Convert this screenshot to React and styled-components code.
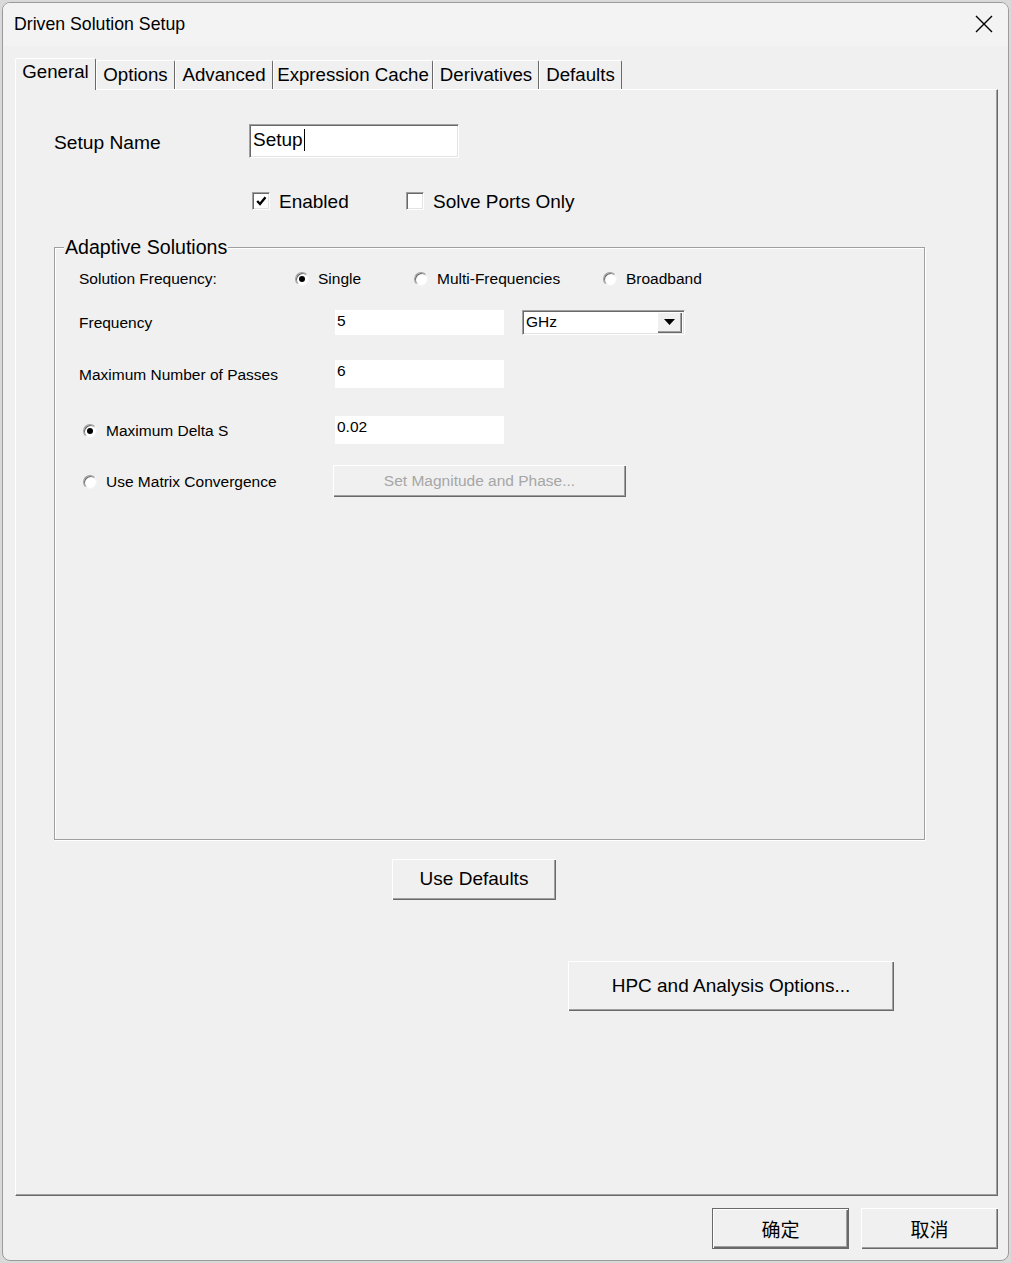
import React from 'react';
import styled, { createGlobalStyle, css } from 'styled-components';

const FONT = "'Liberation Sans', Arial, 'Noto Sans CJK SC', sans-serif";

const GlobalStyle = createGlobalStyle`
  html, body { margin: 0; padding: 0; background: #d9d9d9; }
  body { font-family: ${FONT}; color: #000; }
  #root { width: 1011px; height: 1263px; overflow: hidden; }
  * { box-sizing: border-box; }
`;

const Window = styled.div`
  margin: 2px 0 0 2px;
  width: 1007px;
  height: 1259px;
  border: 1px solid #9b9b9b;
  border-radius: 8px;
  background: #f0f0f0;
  overflow: hidden;
  display: flex;
  flex-direction: column;
`;

const TitleBar = styled.div`
  flex: none;
  height: 43px;
  background: #f3f3f3;
  display: flex;
  align-items: center;
  justify-content: space-between;
  padding: 0 14px 0 11px;
`;

const Title = styled.span`
  font-size: 17.7px;
  line-height: 22px;
  padding-bottom: 2px;
`;

const CloseButton = styled.div`
  width: 20px;
  height: 20px;
  display: flex;
  align-items: center;
  justify-content: center;
  margin-bottom: 2px;
`;

const Body = styled.div`
  flex: 1;
  display: flex;
  flex-direction: column;
  padding: 12px 0 0 12px;
`;

const TabStrip = styled.div`
  display: flex;
  align-items: flex-end;
  height: 31px;
  position: relative;
  z-index: 1;
`;

const Tab = styled.div`
  width: ${p => p.$w}px;
  height: ${p => (p.$active ? 32 : 29)}px;
  margin-bottom: ${p => (p.$active ? -1 : 0)}px;
  background: #f0f0f0;
  border-top: 1px solid #ffffff;
  border-left: 1px solid #ffffff;
  border-right: 1px solid #696969;
  border-radius: 2px 2px 0 0;
  display: flex;
  align-items: center;
  justify-content: center;
  font-size: 18.7px;
  padding-bottom: ${p => (p.$active ? 5 : 0)}px;
  white-space: nowrap;
`;

const Panel = styled.div`
  width: 983px;
  height: 1107px;
  border-top: 1px solid #ffffff;
  border-left: 1px solid #ffffff;
  border-right: 1px solid #696969;
  border-bottom: 1px solid #696969;
  box-shadow: inset -1px -1px 0 #a0a0a0;
  padding: 34px 0 0 38px;
  display: flex;
  flex-direction: column;
  align-items: flex-start;
`;

const Row = styled.div`
  display: flex;
  align-items: center;
  height: ${p => p.$h}px;
  margin-top: ${p => p.$mt || 0}px;
  padding-left: ${p => p.$pl || 0}px;
`;

const BigLabel = styled.span`
  width: ${p => p.$w}px;
  font-size: 19.2px;
  line-height: 24px;
  padding-top: 3px;
  flex: none;
`;

const sunken = css`
  border-style: solid;
  border-width: 1px;
  border-color: #a0a0a0 #ffffff #ffffff #a0a0a0;
  box-shadow: inset 1px 1px 0 #696969, inset -1px -1px 0 #e3e3e3;
`;

const NameField = styled.div`
  width: 210px;
  height: 34px;
  background: #fff;
  ${sunken};
  padding: 0 0 3px 3px;
  display: flex;
  align-items: center;
  font-size: 19px;
`;

const Caret = styled.span`
  display: inline-block;
  width: 1px;
  height: 22px;
  background: #000;
  margin-left: 1px;
`;

const CheckItem = styled.label`
  width: ${p => p.$w}px;
  display: flex;
  align-items: center;
  gap: 9px;
  font-size: 19px;
  line-height: 24px;
`;

const CheckText = styled.span`
  padding-top: 1px;
`;

const CheckBox = styled.span`
  width: 18px;
  height: 18px;
  flex: none;
  background: #fff;
  ${sunken};
  display: flex;
  align-items: center;
  justify-content: center;
`;

const Group = styled.div`
  position: relative;
  width: 871px;
  height: 593px;
  margin-top: 34px;
  border: 1px solid #a0a0a0;
  box-shadow: inset 1px 1px 0 #ffffff, 1px 1px 0 #ffffff;
  padding: 18px 0 0 24px;
  display: flex;
  flex-direction: column;
`;

const Legend = styled.span`
  position: absolute;
  top: -12px;
  left: 9px;
  padding: 0 1px;
  background: #f0f0f0;
  font-size: 19.6px;
  line-height: 22px;
`;

const SmallLabel = styled.span`
  width: ${p => p.$w}px;
  flex: none;
  font-size: 15.5px;
  line-height: 20px;
  display: flex;
  align-items: center;
  padding-top: 2px;
  padding-left: ${p => p.$pl || 0}px;
`;

const RadioItem = styled.span`
  width: ${p => p.$w || 'auto'};
  flex: none;
  display: flex;
  align-items: center;
  gap: 9px;
  font-size: 15.5px;
  line-height: 20px;
  padding-top: ${p => p.$pt || 0}px;
`;

const RadioCircle = styled.span`
  position: relative;
  width: 14px;
  height: 14px;
  flex: none;
  border-radius: 50%;
  background: #fff;
  border: 1px solid;
  border-color: #a0a0a0 #f4f4f4 #f4f4f4 #a0a0a0;
  box-shadow: inset 1px 1px 0 #696969;
  ${p =>
    p.$on &&
    css`
      &::after {
        content: '';
        position: absolute;
        left: 3px;
        top: 3px;
        width: 6px;
        height: 6px;
        border-radius: 50%;
        background: #000;
      }
    `}
`;

const FlatField = styled.div`
  width: 169px;
  height: ${p => p.$h}px;
  background: #fff;
  font-size: 15.5px;
  line-height: 20px;
  padding: 1px 0 0 2px;
  flex: none;
`;

const Select = styled.div`
  width: 163px;
  height: 25px;
  margin-left: 18px;
  background: #fff;
  ${sunken};
  display: flex;
  align-items: center;
  justify-content: space-between;
  padding: 0 2px 0 3px;
  font-size: 15.5px;
`;

const raised = css`
  border: none;
  background: #f0f0f0;
  box-shadow: inset 1px 1px 0 #ffffff, inset -1px -1px 0 #696969, inset -2px -2px 0 #a0a0a0;
`;

const ArrowBox = styled.span`
  width: 25px;
  height: 21px;
  ${raised};
  display: flex;
  align-items: center;
  justify-content: center;
`;

const Button = styled.button`
  font-family: ${FONT};
  color: ${p => (p.disabled ? '#a6a6a6' : '#000')};
  font-size: ${p => p.$fs || 19}px;
  width: ${p => p.$w}px;
  height: ${p => p.$h}px;
  margin-top: ${p => p.$mt || 0}px;
  margin-left: ${p => p.$ml || 0}px;
  padding: 0 0 1px 0;
  flex: none;
  ${raised};
  ${p =>
    p.$default &&
    css`
      border: 1px solid #696969;
      box-shadow: inset 1px 1px 0 #ffffff, inset -1px -1px 0 #696969, inset -2px -2px 0 #a0a0a0;
    `}
`;

const Footer = styled.div`
  display: flex;
  justify-content: flex-end;
  gap: 12px;
  padding-right: 10px;
  margin-top: 12px;
`;

const tabs = [
  { label: 'General', w: 81 },
  { label: 'Options', w: 79 },
  { label: 'Advanced', w: 98 },
  { label: 'Expression Cache', w: 160 },
  { label: 'Derivatives', w: 106 },
  { label: 'Defaults', w: 83 },
];

const CloseIcon = () => (
  <svg width="18" height="18" viewBox="0 0 18 18">
    <path d="M1 1 L17 17 M17 1 L1 17" stroke="#000" strokeWidth="1.4" fill="none" />
  </svg>
);

const CheckMark = () => (
  <svg width="11" height="10" viewBox="0 0 11 10">
    <path d="M1.2 5 L4 8 L9.5 1.2" stroke="#000" strokeWidth="2.4" fill="none" />
  </svg>
);

const DownArrow = () => (
  <svg width="11" height="6" viewBox="0 0 11 6">
    <path d="M0 0 L11 0 L5.5 6 Z" fill="#000" />
  </svg>
);

export default function App() {
  return (
    <>
      <GlobalStyle />
      <Window>
        <TitleBar>
          <Title>Driven Solution Setup</Title>
          <CloseButton>
            <CloseIcon />
          </CloseButton>
        </TitleBar>
        <Body>
          <TabStrip>
            {tabs.map((t, i) => (
              <Tab key={t.label} $w={t.w} $active={i === 0}>
                {t.label}
              </Tab>
            ))}
          </TabStrip>
          <Panel>
            <Row $h={34}>
              <BigLabel $w={195}>Setup Name</BigLabel>
              <NameField>
                Setup
                <Caret />
              </NameField>
            </Row>
            <Row $h={24} $mt={31} $pl={198}>
              <CheckItem $w={154}>
                <CheckBox>
                  <CheckMark />
                </CheckBox>
                <CheckText>Enabled</CheckText>
              </CheckItem>
              <CheckItem $w={200}>
                <CheckBox />
                <CheckText>Solve Ports Only</CheckText>
              </CheckItem>
            </Row>
            <Group>
              <Legend>Adaptive Solutions</Legend>
              <Row $h={24}>
                <SmallLabel $w={216}>Solution Frequency:</SmallLabel>
                <RadioItem $w="119px" $pt={2}>
                  <RadioCircle $on />
                  Single
                </RadioItem>
                <RadioItem $w="189px" $pt={2}>
                  <RadioCircle />
                  Multi-Frequencies
                </RadioItem>
                <RadioItem $pt={2}>
                  <RadioCircle />
                  Broadband
                </RadioItem>
              </Row>
              <Row $h={26} $mt={19}>
                <SmallLabel $w={256}>Frequency</SmallLabel>
                <FlatField $h={25}>5</FlatField>
                <Select>
                  GHz
                  <ArrowBox>
                    <DownArrow />
                  </ArrowBox>
                </Select>
              </Row>
              <Row $h={28} $mt={25}>
                <SmallLabel $w={256}>Maximum Number of Passes</SmallLabel>
                <FlatField $h={28}>6</FlatField>
              </Row>
              <Row $h={28} $mt={28}>
                <SmallLabel $w={256} $pl={4}>
                  <RadioItem>
                    <RadioCircle $on />
                    Maximum Delta S
                  </RadioItem>
                </SmallLabel>
                <FlatField $h={28}>0.02</FlatField>
              </Row>
              <Row $h={32} $mt={21}>
                <SmallLabel $w={254} $pl={4}>
                  <RadioItem>
                    <RadioCircle />
                    Use Matrix Convergence
                  </RadioItem>
                </SmallLabel>
                <Button disabled $w={293} $h={32} $fs={15.5}>
                  Set Magnitude and Phase...
                </Button>
              </Row>
            </Group>
            <Button $w={164} $h={41} $mt={19} $ml={338}>
              Use Defaults
            </Button>
            <Button $w={326} $h={50} $mt={61} $ml={514}>
              HPC and Analysis Options...
            </Button>
          </Panel>
          <Footer>
            <Button $default $w={137} $h={41}>
              确定
            </Button>
            <Button $w={137} $h={41}>
              取消
            </Button>
          </Footer>
        </Body>
      </Window>
    </>
  );
}
